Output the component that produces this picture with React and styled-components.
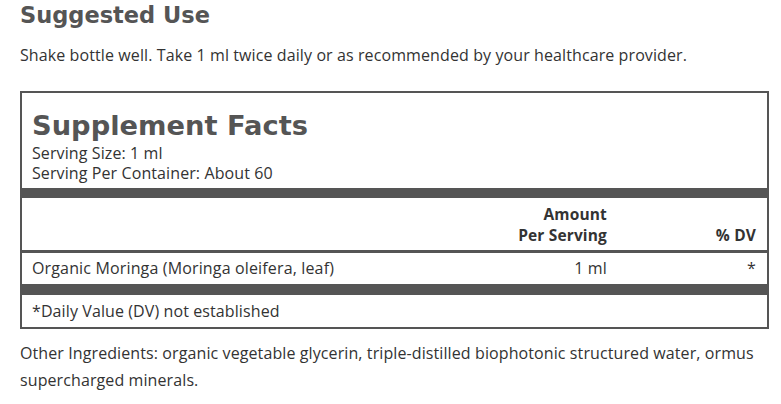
import styled, { createGlobalStyle } from "styled-components"

const GlobalStyle = createGlobalStyle`
  html, body {
    margin: 0;
    padding: 0;
    background: #fff;
  }
  body {
    font-family: "Open Sans", "Noto Sans", sans-serif;
    color: #333;
  }
`

const Page = styled.div`
  padding: 0 12px 0 20px;
`

const SectionTitle = styled.h2`
  margin: 0;
  padding-top: 1px;
  font-family: "DejaVu Sans", Lato, sans-serif;
  font-weight: 700;
  font-size: 22.5px;
  line-height: 28px;
  color: #555;
`

const Para = styled.p`
  margin: ${(p) => p.$mt}px 0 0;
  font-size: 16px;
  letter-spacing: 0.1px;
  line-height: 27px;
  color: #333;
`

const FactsBox = styled.div`
  margin-top: 22px;
  border: 2px solid #555;
`

const FactsHead = styled.div`
  padding: 18px 10px 5px;
`

const FactsTitle = styled.h3`
  margin: 0 0 2px;
  font-family: "DejaVu Sans", Lato, sans-serif;
  font-weight: 700;
  font-size: 27.3px;
  line-height: 30px;
  color: #555;
`

const Serving = styled.div`
  font-size: 16px;
  letter-spacing: 0.1px;
  line-height: 20px;
  color: #333;
`

const Bar = styled.div`
  height: ${(p) => p.$h}px;
  background: #555;
`

const Row = styled.div`
  display: grid;
  grid-template-columns: 1fr 120px 149px;
  align-items: ${(p) => (p.$head ? "end" : "center")};
  padding: ${(p) => (p.$head ? "6px 11px 4px 10px" : "0 11px 0 10px")};
  min-height: ${(p) => (p.$head ? "42px" : "31px")};
  font-size: ${(p) => (p.$head ? "15.5px" : "16px")};
  letter-spacing: 0.15px;
  line-height: 21px;
  font-weight: ${(p) => (p.$head ? 700 : 400)};
  color: #333;
`

const Cell = styled.div`
  text-align: ${(p) => (p.$right ? "right" : "left")};
`

const Note = styled.div`
  padding: 0 10px;
  height: 32px;
  display: flex;
  align-items: center;
  font-size: 16px;
  letter-spacing: 0.1px;
  color: #333;
`

export default function App() {
  return (
    <>
      <GlobalStyle />
      <Page>
        <SectionTitle>Suggested Use</SectionTitle>
        <Para $mt={13}>Shake bottle well. Take 1 ml twice daily or as recommended by your healthcare provider.</Para>
        <FactsBox>
          <FactsHead>
            <FactsTitle>Supplement Facts</FactsTitle>
            <Serving>Serving Size: 1 ml</Serving>
            <Serving>Serving Per Container: About 60</Serving>
          </FactsHead>
          <Bar $h={10} />
          <Row $head>
            <Cell />
            <Cell $right>
              Amount
              <br />
              Per Serving
            </Cell>
            <Cell $right>% DV</Cell>
          </Row>
          <Bar $h={3} />
          <Row>
            <Cell>Organic Moringa (Moringa oleifera, leaf)</Cell>
            <Cell $right>1 ml</Cell>
            <Cell $right>*</Cell>
          </Row>
          <Bar $h={11} />
          <Note>*Daily Value (DV) not established</Note>
        </FactsBox>
        <Para $mt={11}>
          Other Ingredients: organic vegetable glycerin, triple-distilled biophotonic structured water, ormus
          supercharged minerals.
        </Para>
      </Page>
    </>
  )
}
